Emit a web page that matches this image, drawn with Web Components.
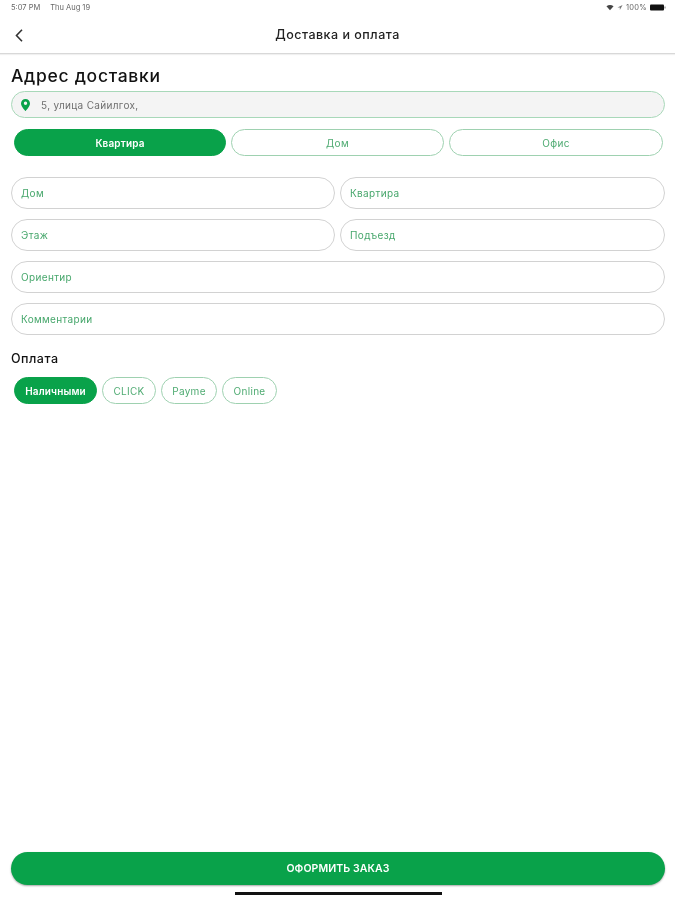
<!DOCTYPE html>
<html lang="ru">
<head>
<meta charset="utf-8">
<title>Доставка и оплата</title>
<style>
  html, body { margin: 0; padding: 0; height: 100%; background: #fff; overflow: hidden; }
  body { font-family: Inter, "Noto Sans", sans-serif; }
</style>
</head>
<body>
<checkout-page></checkout-page>

<script>
const GREEN = '#09a24a';

class StatusBar extends HTMLElement {
  constructor() {
    super();
    this.attachShadow({ mode: 'open' });
    this.shadowRoot.innerHTML = `
      <style>
        :host { display: flex; justify-content: space-between; align-items: center; height: 15px; padding: 0 9px 0 11px; font-size: 7.500px; color: #666; }
        .left { display: flex; gap: 10px; }
        .right { display: flex; align-items: center; gap: 3px; }
        .pct { letter-spacing: .3px; }
        svg { display: block; }
      </style>
      <div class="left"><span>5:07 PM</span><span>Thu Aug 19</span></div>
      <div class="right">
        <svg width="8" height="7" viewBox="0 0 9 7"><path d="M0.5 2.2C3 0 6 0 8.500 2.200L4.500 6.500Z" fill="#444"/></svg>
        <svg width="6" height="7" viewBox="0 0 7 7"><path d="M6.500 0.500L0.500 3.500H3.300V6.500Z" fill="#777"/></svg>
        <span class="pct">100%</span>
        <svg width="16" height="7" viewBox="0 0 16 7"><rect x="0" y="0.500" width="14" height="6" rx="1" fill="#111"/><rect x="14.500" y="2.500" width="1" height="2" fill="#777"/></svg>
      </div>`;
  }
}

class TopBar extends HTMLElement {
  constructor() {
    super();
    this.attachShadow({ mode: 'open' });
    this.shadowRoot.innerHTML = `
      <style>
        :host { display: flex; align-items: center; justify-content: center; position: relative; height: 39px; box-sizing: border-box; padding-top: 1px; border-bottom: 1px solid #d8d8d8; box-shadow: 0 1px 1px rgba(0,0,0,.06); font-size: 12.500px; font-weight: 500; letter-spacing: .5px; color: #222; }
        svg { position: absolute; left: 15px; top: 14px; }
      </style>
      <svg width="8" height="13" viewBox="0 0 8 13"><path d="M7 0.800L1.500 6.500L7 12.200" fill="none" stroke="#333" stroke-width="1.600"/></svg>
      <slot></slot>`;
  }
}

class AddressField extends HTMLElement {
  constructor() {
    super();
    this.attachShadow({ mode: 'open' });
    this.shadowRoot.innerHTML = `
      <style>
        :host { display: flex; align-items: center; gap: 11px; height: 27px; box-sizing: border-box; padding-left: 9px; border: 1px solid #a8d8b9; border-radius: 14px; background: #f4f4f4; font-size: 10px; letter-spacing: .33px; color: #6f6f6f; }
        svg { display: block; }
      </style>
      <svg width="9" height="12" viewBox="0 0 9 12"><path fill-rule="evenodd" d="M4.500 0C2 0 0 2 0 4.400C0 7.500 4.500 12 4.500 12S9 7.500 9 4.400C9 2 7 0 4.500 0ZM4.500 6A1.700 1.700 0 1 1 4.500 2.600A1.700 1.700 0 0 1 4.500 6Z" fill="${GREEN}"/></svg>
      <slot></slot>`;
  }
}

// pill used for address type and payment chips
class ChoicePill extends HTMLElement {
  constructor() {
    super();
    this.attachShadow({ mode: 'open' });
    this.shadowRoot.innerHTML = `
      <style>
        :host { display: flex; align-items: center; justify-content: center; height: 27px; box-sizing: border-box; border: 1px solid #9ed1b0; border-radius: 14px; background: #fff; font-size: 10px; letter-spacing: .3px; color: #4fab72; white-space: nowrap; }
        :host([active]) { background: ${GREEN}; border-color: ${GREEN}; color: #fff; font-weight: 600; letter-spacing: .15px; }
      </style>
      <slot></slot>`;
  }
}

class TextField extends HTMLElement {
  constructor() {
    super();
    this.attachShadow({ mode: 'open' });
    this.shadowRoot.innerHTML = `
      <style>
        :host { display: flex; align-items: center; height: 32px; box-sizing: border-box; padding: 0 0 1px 9px; border: 1px solid #d2d2d2; border-radius: 16px; background: #fff; font-size: 10px; letter-spacing: .35px; color: #47a76c; }
      </style>
      <slot></slot>`;
  }
}

class OrderButton extends HTMLElement {
  constructor() {
    super();
    this.attachShadow({ mode: 'open' });
    this.shadowRoot.innerHTML = `
      <style>
        :host { display: flex; align-items: center; justify-content: center; height: 33px; border-radius: 17px; background: ${GREEN}; box-shadow: 0 1px 2px rgba(0,0,0,.35); font-size: 10.500px; font-weight: 600; letter-spacing: .1px; color: #fff; }
      </style>
      <slot></slot>`;
  }
}

class CheckoutPage extends HTMLElement {
  constructor() {
    super();
    this.attachShadow({ mode: 'open' });
    this.shadowRoot.innerHTML = `
      <style>
        :host { display: flex; flex-direction: column; height: 900px; box-sizing: border-box; filter: blur(.35px); }
        main { flex: 1; display: flex; flex-direction: column; padding: 0 10px 0 11px; }
        h1 { margin: 11px 0 5px; font-size: 17.500px; line-height: 21px; font-weight: 500; letter-spacing: .7px; color: #111; }
        h2 { margin: 16px 0 11px; font-size: 12.500px; line-height: 15px; font-weight: 500; letter-spacing: .5px; color: #111; }
        .tabs { display: grid; grid-template-columns: 212px 213px 214px; gap: 5px; margin: 11px 2px 21px 3px; }
        .fields { display: grid; grid-template-columns: 324px 1fr; gap: 10px 5px; }
        .wide { grid-column: 1 / 3; }
        .chips { display: grid; grid-template-columns: 83px 54px 56px 55px; gap: 5px; padding-left: 3px; }
        footer { padding: 0 10px 0 11px; }
        .home { width: 207px; height: 3px; margin: 7px auto 5px; background: #111; }
      </style>
      <status-bar></status-bar>
      <top-bar>Доставка и оплата</top-bar>
      <main>
        <h1>Адрес доставки</h1>
        <address-field>5, улица Сайилгох,</address-field>
        <div class="tabs">
          <choice-pill active>Квартира</choice-pill>
          <choice-pill>Дом</choice-pill>
          <choice-pill>Офис</choice-pill>
        </div>
        <div class="fields">
          <text-field>Дом</text-field>
          <text-field>Квартира</text-field>
          <text-field>Этаж</text-field>
          <text-field>Подъезд</text-field>
          <text-field class="wide">Ориентир</text-field>
          <text-field class="wide">Комментарии</text-field>
        </div>
        <h2>Оплата</h2>
        <div class="chips">
          <choice-pill active>Наличными</choice-pill>
          <choice-pill>CLICK</choice-pill>
          <choice-pill>Payme</choice-pill>
          <choice-pill>Online</choice-pill>
        </div>
      </main>
      <footer>
        <order-button>ОФОРМИТЬ ЗАКАЗ</order-button>
        <div class="home"></div>
      </footer>`;
  }
}

customElements.define('status-bar', StatusBar);
customElements.define('top-bar', TopBar);
customElements.define('address-field', AddressField);
customElements.define('choice-pill', ChoicePill);
customElements.define('text-field', TextField);
customElements.define('order-button', OrderButton);
customElements.define('checkout-page', CheckoutPage);
</script>
</body>
</html>
